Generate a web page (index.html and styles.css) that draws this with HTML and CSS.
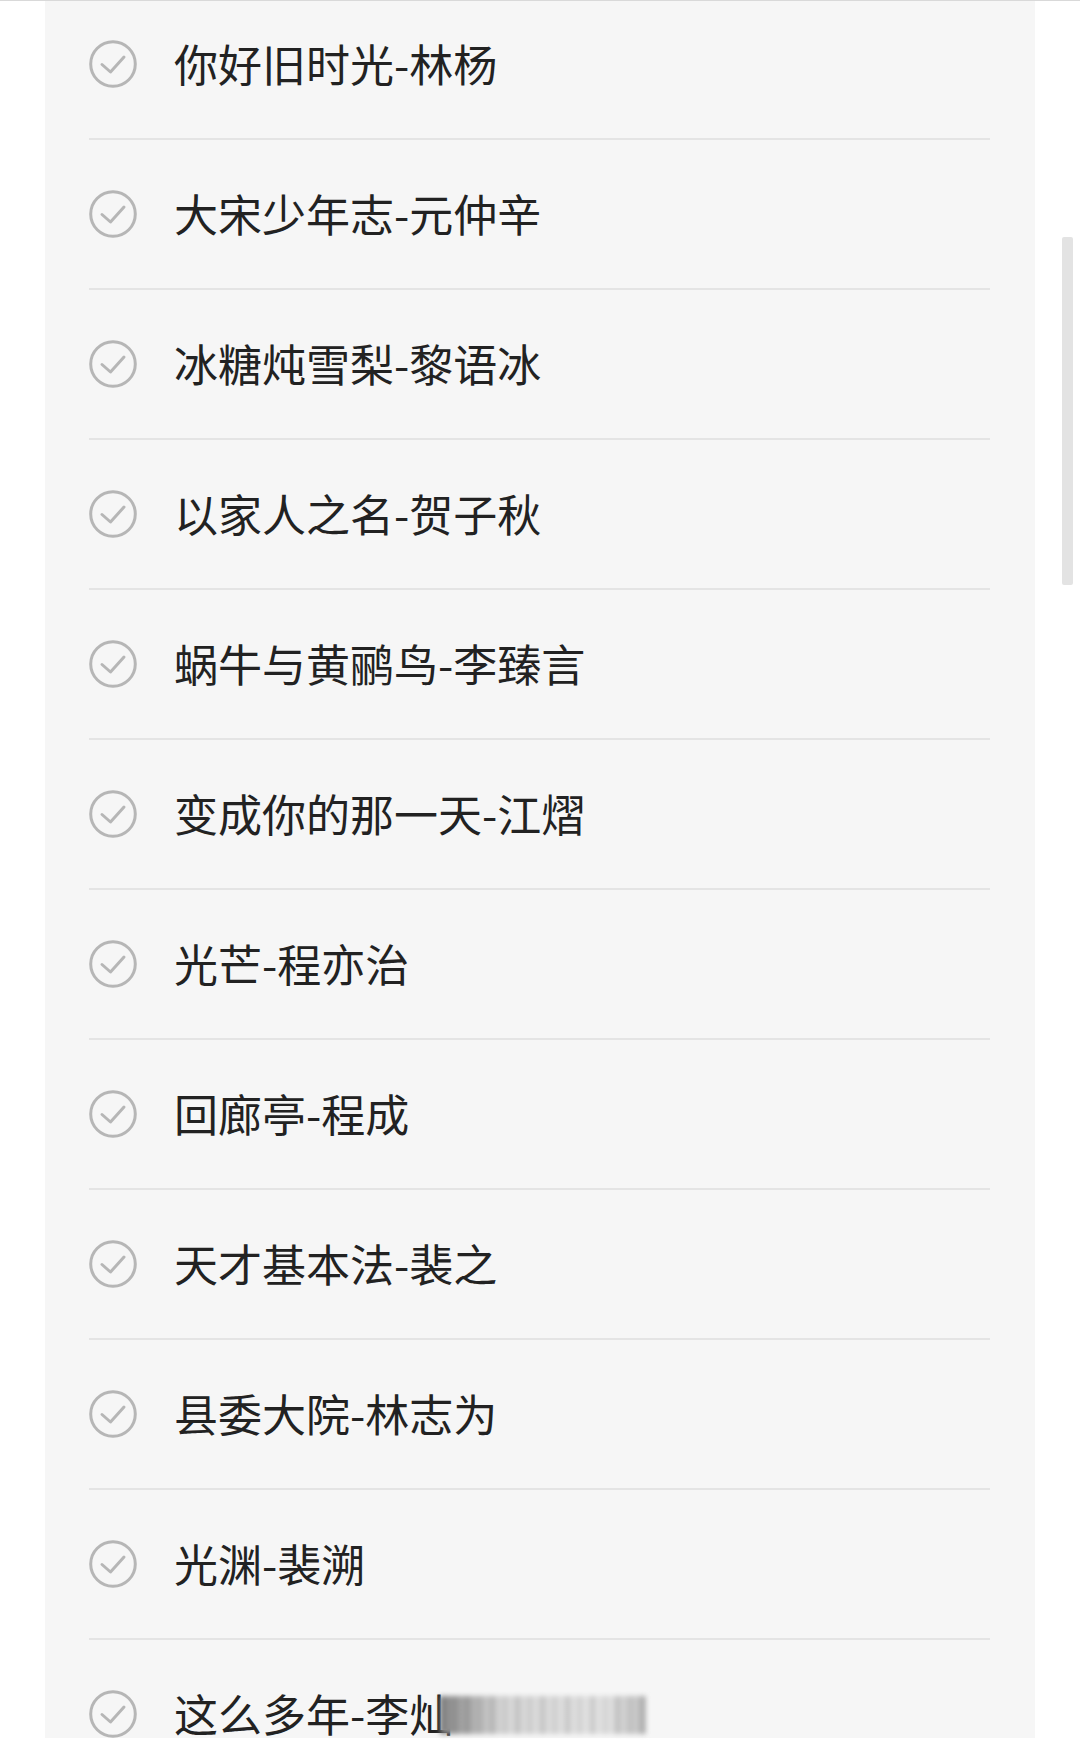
FILE: index.html
```html
<!DOCTYPE html>
<html>
<head>
    <meta charset="UTF-8">
    <title>歌单</title>
    <link rel="stylesheet" href="styles.css">
</head>
<body>

    <div class="panel">
        <ul class="list">
            <li class="row"><svg class="check" viewBox="0 0 48 48"><circle cx="24" cy="24" r="22.3"/><path d="M13 24.5 L21.5 32 L35 17"/></svg><span class="name">你好旧时光-林杨</span></li>
            <li class="row"><svg class="check" viewBox="0 0 48 48"><circle cx="24" cy="24" r="22.3"/><path d="M13 24.5 L21.5 32 L35 17"/></svg><span class="name">大宋少年志-元仲辛</span></li>
            <li class="row"><svg class="check" viewBox="0 0 48 48"><circle cx="24" cy="24" r="22.3"/><path d="M13 24.5 L21.5 32 L35 17"/></svg><span class="name">冰糖炖雪梨-黎语冰</span></li>
            <li class="row"><svg class="check" viewBox="0 0 48 48"><circle cx="24" cy="24" r="22.3"/><path d="M13 24.5 L21.5 32 L35 17"/></svg><span class="name">以家人之名-贺子秋</span></li>
            <li class="row"><svg class="check" viewBox="0 0 48 48"><circle cx="24" cy="24" r="22.3"/><path d="M13 24.5 L21.5 32 L35 17"/></svg><span class="name">蜗牛与黄鹂鸟-李臻言</span></li>
            <li class="row"><svg class="check" viewBox="0 0 48 48"><circle cx="24" cy="24" r="22.3"/><path d="M13 24.5 L21.5 32 L35 17"/></svg><span class="name">变成你的那一天-江熠</span></li>
            <li class="row"><svg class="check" viewBox="0 0 48 48"><circle cx="24" cy="24" r="22.3"/><path d="M13 24.5 L21.5 32 L35 17"/></svg><span class="name">光芒-程亦治</span></li>
            <li class="row"><svg class="check" viewBox="0 0 48 48"><circle cx="24" cy="24" r="22.3"/><path d="M13 24.5 L21.5 32 L35 17"/></svg><span class="name">回廊亭-程成</span></li>
            <li class="row"><svg class="check" viewBox="0 0 48 48"><circle cx="24" cy="24" r="22.3"/><path d="M13 24.5 L21.5 32 L35 17"/></svg><span class="name">天才基本法-裴之</span></li>
            <li class="row"><svg class="check" viewBox="0 0 48 48"><circle cx="24" cy="24" r="22.3"/><path d="M13 24.5 L21.5 32 L35 17"/></svg><span class="name">县委大院-林志为</span></li>
            <li class="row"><svg class="check" viewBox="0 0 48 48"><circle cx="24" cy="24" r="22.3"/><path d="M13 24.5 L21.5 32 L35 17"/></svg><span class="name">光渊-裴溯</span></li>
            <li class="row"><svg class="check" viewBox="0 0 48 48"><circle cx="24" cy="24" r="22.3"/><path d="M13 24.5 L21.5 32 L35 17"/></svg><span class="name">这么多年-李灿<span class="mask"></span></span></li>
        </ul>
    </div>

    <div class="scrollbar"></div>

</body>
</html>
```

FILE: styles.css
```css
body {
    margin: 0;
    padding: 0;
    height: 1749px;
    overflow: hidden;
    background-color: #ffffff;
    border-top: 1px solid #d9d9d9;
    font-family: "Noto Sans CJK SC", "Noto Sans", sans-serif;
}

.panel {
    margin-left: 45px;
    width: 990px;
    height: 1748px;
    background-color: #f6f6f6;
    padding: 0 45px 0 44px;
    box-sizing: border-box;
}

.list {
    list-style: none;
    margin: -11px 0 0 0;
    padding: 0;
}

.row {
    display: flex;
    align-items: center;
    height: 148px;
    border-bottom: 2px solid #e4e4e4;
}

.check {
    width: 48px;
    height: 48px;
    flex-shrink: 0;
    fill: none;
    stroke: #b6b6b6;
    stroke-width: 3;
    stroke-linecap: round;
    stroke-linejoin: round;
}

.name {
    margin-left: 37px;
    margin-top: -3px;
    font-size: 44px;
    font-weight: 400;
    color: #222222;
    white-space: nowrap;
    display: flex;
    align-items: center;
}

.mask {
    display: inline-block;
    width: 206px;
    height: 38px;
    margin-left: -13px;
    margin-top: 4px;
    background: repeating-linear-gradient(90deg, #dadada 0 5px, #f1f1f1 5px 13px, #e2e2e2 13px 17px, #f3f3f3 17px 25px),
        linear-gradient(90deg, #8c8c8c, #e0e0e0 30%, #ededed 80%, #c8c8c8);
    background-blend-mode: multiply;
    filter: blur(2.5px);
}

.scrollbar {
    position: fixed;
    top: 237px;
    left: 1062px;
    width: 11px;
    height: 348px;
    background-color: #e3e3e3;
    border-radius: 2px;
}
```
